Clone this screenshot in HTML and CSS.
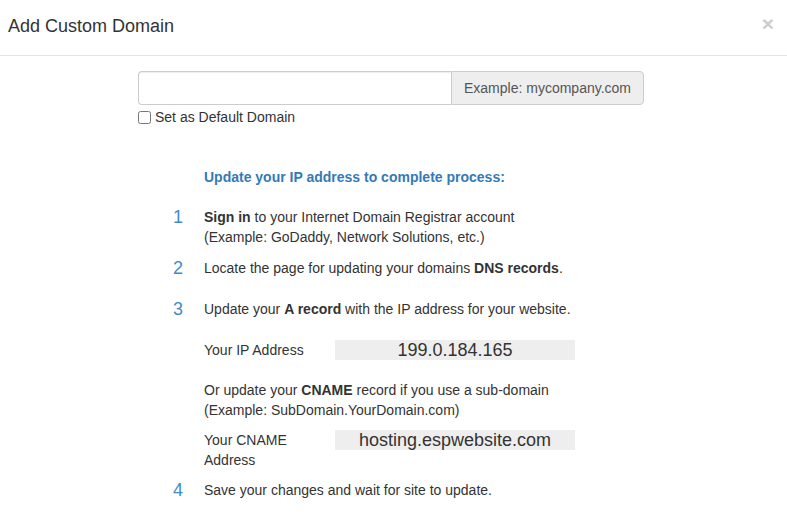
FILE: index.html
```html
<!DOCTYPE html>
<html>
<head>
<meta charset="utf-8">
<link rel="stylesheet" href="styles.css">
</head>
<body>
<div class="modal">
  <div class="modal-header">
    <h4 class="modal-title">Add Custom Domain</h4>
    <button class="close" type="button">×</button>
  </div>
  <div class="modal-body">
    <div class="input-group">
      <input class="form-control" type="text">
      <span class="addon">Example: mycompany.com</span>
    </div>
    <label class="check"><input type="checkbox"> Set as Default Domain</label>

    <div class="steps">
      <div class="steps-title">Update your IP address to complete process:</div>

      <div class="step s1">
        <div class="num">1</div>
        <div class="txt"><b>Sign in</b> to your Internet Domain Registrar account<br>(Example: GoDaddy, Network Solutions, etc.)</div>
      </div>

      <div class="step s2">
        <div class="num">2</div>
        <div class="txt">Locate the page for updating your domains <b>DNS records</b>.</div>
      </div>

      <div class="step s3">
        <div class="num">3</div>
        <div class="txt">
          Update your <b>A record</b> with the IP address for your website.
          <div class="addr ip">
            <div class="addr-label">Your IP Address</div>
            <div class="addr-value">199.0.184.165</div>
          </div>
          <div class="cname-text">Or update your <b>CNAME</b> record if you use a sub-domain<br>(Example: SubDomain.YourDomain.com)</div>
          <div class="addr cname">
            <div class="addr-label">Your CNAME Address</div>
            <div class="addr-value">hosting.espwebsite.com</div>
          </div>
        </div>
      </div>

      <div class="step s4">
        <div class="num">4</div>
        <div class="txt">Save your changes and wait for site to update.</div>
      </div>
    </div>
  </div>
</div>
</body>
</html>
```

FILE: styles.css
```css
* { box-sizing: border-box; }
html, body { margin: 0; padding: 0; background: #fff; }
body {
  font-family: "Liberation Sans", Arial, sans-serif;
  font-size: 14px;
  line-height: 20px;
  color: #333;
}
.modal { width: 787px; height: 524px; overflow: hidden; background: #fff; }
.modal-header {
  display: flex;
  justify-content: space-between;
  align-items: flex-start;
  padding: 13px 13px 16px 8px;
  border-bottom: 1px solid #e5e5e5;
}
.modal-title {
  margin: 0;
  font-size: 18px;
  font-weight: normal;
  line-height: 26px;
  color: #333;
}
.close {
  border: 0;
  background: none;
  padding: 0;
  margin-top: 0;
  font-family: "Liberation Sans", Arial, sans-serif;
  font-size: 21px;
  font-weight: bold;
  line-height: 21px;
  color: #000;
  opacity: 0.2;
}
.modal-body { padding: 15px 0 0 138px; }
.input-group { display: flex; width: 506px; height: 34px; }
.form-control {
  flex: 1;
  min-width: 0;
  height: 34px;
  margin: 0;
  border: 1px solid #ccc;
  border-right: 0;
  border-radius: 4px 0 0 4px;
  box-shadow: inset 0 1px 1px rgba(0,0,0,.075);
  padding: 6px 12px;
  font: inherit;
}
.addon {
  width: 193px;
  flex: none;
  height: 34px;
  padding: 6px 12px;
  background: #eee;
  border: 1px solid #ccc;
  border-radius: 0 4px 4px 0;
  color: #555;
  text-align: center;
  line-height: 20px;
}
.check {
  display: flex;
  align-items: center;
  margin-top: 2px;
  height: 20px;
  gap: 4px;
  cursor: pointer;
}
.check input { margin: 0; width: 13px; height: 13px; }
.steps { margin-left: 34px; }
.steps-title {
  margin-top: 40px;
  margin-left: 32px;
  font-weight: bold;
  color: #337ab7;
}
.step { display: flex; }
.num {
  width: 32px;
  flex: none;
  margin-left: 0;
  font-size: 18px;
  line-height: 20px;
  padding-left: 1px;
  color: #428bca;
}
.s1 { margin-top: 20px; }
.s2 { margin-top: 11px; }
.s3 { margin-top: 21px; }
.s4 { margin-top: 10px; }
.addr {
  display: grid;
  grid-template-columns: 120px 240px;
  column-gap: 11px;
  align-items: start;
}
.ip { margin-top: 21px; }
.cname { margin-top: 10px; }
.cname-text { margin-top: 20px; }
.addr-value {
  background: #eee;
  height: 20px;
  font-size: 18px;
  line-height: 20px;
  text-align: center;
  color: #333;
}
```
